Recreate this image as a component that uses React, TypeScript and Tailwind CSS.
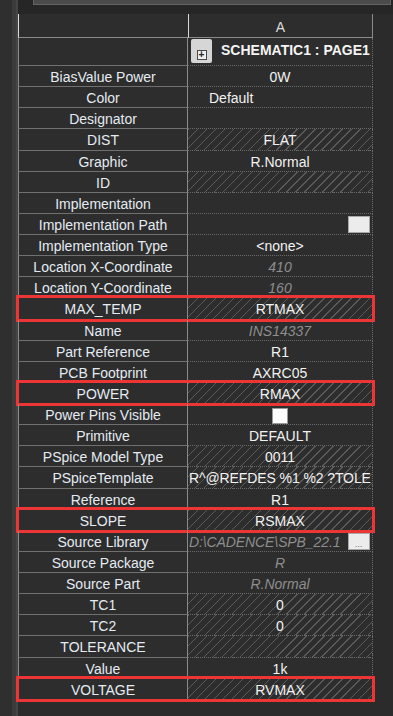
import React from 'react';

type Row = {
  label: string;
  value?: string;
  italic?: boolean;
  hatch?: boolean;
  left?: boolean;
  box?: boolean;
  extra?: 'button' | 'checkbox' | 'dots';
};

const rows: Row[] = [
  { label: 'BiasValue Power', value: '0W' },
  { label: 'Color', value: 'Default', left: true },
  { label: 'Designator' },
  { label: 'DIST', value: 'FLAT', hatch: true },
  { label: 'Graphic', value: 'R.Normal' },
  { label: 'ID', hatch: true },
  { label: 'Implementation' },
  { label: 'Implementation Path', extra: 'button' },
  { label: 'Implementation Type', value: '<none>' },
  { label: 'Location X-Coordinate', value: '410', italic: true },
  { label: 'Location Y-Coordinate', value: '160', italic: true },
  { label: 'MAX_TEMP', value: 'RTMAX', hatch: true, box: true },
  { label: 'Name', value: 'INS14337', italic: true },
  { label: 'Part Reference', value: 'R1' },
  { label: 'PCB Footprint', value: 'AXRC05' },
  { label: 'POWER', value: 'RMAX', hatch: true, box: true },
  { label: 'Power Pins Visible', extra: 'checkbox' },
  { label: 'Primitive', value: 'DEFAULT' },
  { label: 'PSpice Model Type', value: '0011', hatch: true },
  { label: 'PSpiceTemplate', value: 'R^@REFDES %1 %2 ?TOLE', hatch: true, left: true },
  { label: 'Reference', value: 'R1' },
  { label: 'SLOPE', value: 'RSMAX', hatch: true, box: true },
  { label: 'Source Library', value: 'D:\\CADENCE\\SPB_22.1', italic: true, left: true, extra: 'dots' },
  { label: 'Source Package', value: 'R', italic: true },
  { label: 'Source Part', value: 'R.Normal', italic: true },
  { label: 'TC1', value: '0', hatch: true },
  { label: 'TC2', value: '0', hatch: true },
  { label: 'TOLERANCE', hatch: true },
  { label: 'Value', value: '1k' },
  { label: 'VOLTAGE', value: 'RVMAX', hatch: true, box: true },
];

const hatch =
  'bg-[image:repeating-linear-gradient(135deg,#5a5a5a_0px,#5a5a5a_1px,transparent_1px,transparent_6.4px)]';

function PropRow({ row }: { row: Row }) {
  return (
    <div className="relative flex h-[21.14px]">
      <div className="flex w-[170px] shrink-0 items-center justify-center border-r border-b border-l border-r-[#8a8a8a] border-b-[#707070] border-l-[#8a8a8a] pt-[2px] text-[#e4ebf2]">
        {row.label}
      </div>
      <div
        className={`relative flex w-[185px] shrink-0 items-center overflow-hidden whitespace-nowrap border-r border-b border-dotted border-[#6a6a6a] pt-[2px] ${
          row.hatch ? hatch : ''
        } ${row.left ? 'justify-start' : 'justify-center'} ${
          row.italic ? 'italic text-[#8e8e8e]' : 'text-[#f2f2f2]'
        }`}
      >
        {row.value && (
          <span
            className={
              row.value === 'Default'
                ? 'pl-[21px]'
                : row.left
                  ? 'pl-[1px] tracking-[-0.1px]'
                  : ''
            }
          >
            {row.value}
          </span>
        )}
        {row.extra === 'checkbox' && (
          <span className="mt-[1px] h-[16px] w-[16px] border border-[#9a9a9a] bg-white" />
        )}
        {(row.extra === 'button' || row.extra === 'dots') && (
          <span className="absolute top-[2px] right-[2px] flex h-[17px] w-[22px] items-end justify-center border border-[#a8a8a8] bg-[#ececec] text-[9px] leading-[10px] text-[#777]">
            {row.extra === 'dots' ? '...' : ''}
          </span>
        )}
      </div>
      {row.box && (
        <div className="pointer-events-none absolute -top-[3px] -right-[2px] -bottom-[2px] -left-[2px] border-[3px] border-[#ee3535]" />
      )}
    </div>
  );
}

export default function App() {
  return (
    <div
      className="flex h-[716px] w-[393px] overflow-hidden bg-[#2b2b2b] text-[14px] leading-none"
      style={{ fontFamily: '"Liberation Sans", Arial, sans-serif' }}
    >
      {/* left gutter */}
      <div className="w-[12px] shrink-0 bg-[#2f2f2f]" />
      <div className="w-[4px] shrink-0 bg-[#3b3b3b]" />
      <div className="w-[2px] shrink-0 bg-[#454545]" />

      <div className="flex flex-1 flex-col">
        <div className="h-[14px] bg-[#262626]">
          <div className="ml-[15px] h-[5px] w-[358px] border-x border-b border-[#626262] bg-[#4b4b4b]" />
        </div>

        <div className="flex">
          <div className="w-[355px] shrink-0 bg-[#2d2d2d]">
            {/* column header */}
            <div className="flex h-[24px]">
              <div className="w-[170px] shrink-0 border-b border-l border-b-[#8a8a8a] border-l-[#dcdcdc]" />
              <div className="flex w-[185px] shrink-0 items-center justify-center border-r border-b border-l border-r-[#8a8a8a] border-b-[#8a8a8a] border-l-[#d8d8d8] pt-[3px] text-[#dcdcdc]">
                A
              </div>
            </div>

            {/* schematic row */}
            <div className="flex h-[28px]">
              <div className="w-[170px] shrink-0 border-r border-b border-l border-r-[#8a8a8a] border-b-[#707070] border-l-[#8a8a8a]" />
              <div className="flex w-[185px] shrink-0 items-start border-r border-b border-dotted border-[#6a6a6a] pt-[5px]">
                <span className="ml-[3px] -mt-[4px] flex h-[24px] w-[21px] items-end justify-center rounded-[2px] bg-[#d6d6d6] pb-[3px]">
                  <span className="flex h-[10px] w-[10px] items-center justify-center border border-[#4a4a4a] bg-[#eeeeee] text-[10px] font-bold leading-none text-[#222]">
                    +
                  </span>
                </span>
                <span className="ml-[9px] whitespace-nowrap font-bold text-[#f4f4f4]">SCHEMATIC1 : PAGE1</span>
              </div>
            </div>

            {rows.map((row) => (
              <PropRow key={row.label} row={row} />
            ))}
          </div>
          <div className="flex-1 bg-[#2b2b2b]" />
        </div>
      </div>
    </div>
  );
}
